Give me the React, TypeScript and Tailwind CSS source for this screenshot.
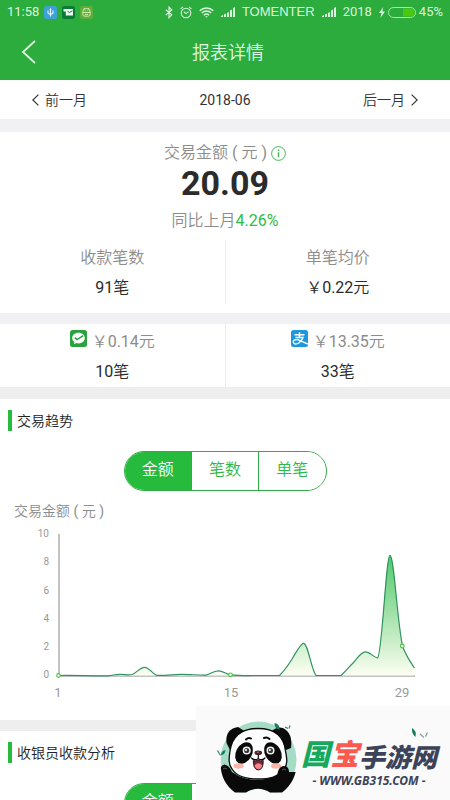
import type { ReactNode } from "react";

const tabs = ["金额", "笔数", "单笔"];

const linePath =
  "M58.5 155.5C75 155.2 92 156 108 155.8C113 155.5 115 154.3 120 154.3C125 154.3 128 155.4 132 154.5C136 153.5 140 147.3 144.5 147.3C149 147.3 153 154 156.5 155.3C164 156 174 154.3 181 154.3C190 154.3 198 155.3 206 155.2C210 154.5 213 150.8 218.5 150.8C223 150.8 226 154.3 230.5 154.8C240 155.8 250 155.5 255 155.5L279.5 155.5C284 151 288 145.5 291.8 139.5C296 132 301 123.3 303.5 123.3C308 123.3 311 149 316 155.5L341 155.5C345 152 349 147 353.5 142.5C357 138.5 361 131.8 365.5 131.8C370 131.8 373 137 377.5 138C382 136 386 35.3 390 35.3C394 35.3 397 100 402.5 126C406 136 411 143 414.5 148";

function SignalBars() {
  return (
    <svg width="14" height="10" viewBox="0 0 14 10" fill="#d9f6dd">
      <path d="M0 10V9L2 8v2zM3 10V7.6L5 6.6V10zM6 10V6l2-1v5zM9 10V3.5l2-1V10zM12 10V1l2-1v10z" />
    </svg>
  );
}

function StatusBar() {
  return (
    <div className="flex h-6 items-center justify-between px-[7px] text-[13px] leading-6 text-[#d9f6dd]">
      <div className="flex items-center gap-[5px]">
        <span>11:58</span>
        <svg width="13" height="13" viewBox="0 0 13 13">
          <rect width="13" height="13" rx="2.5" fill="#3ea2d8" />
          <path d="M6.5 10.5V3M4 4.5v2q0 1.5 2.5 1.7M9 4.5v2q0 1.5-2.5 1.7" fill="none" stroke="#e8f8ff" strokeWidth="1.1" />
          <path d="M5.3 3.8L6.5 2l1.2 1.8z" fill="#e8f8ff" />
        </svg>
        <svg width="13" height="13" viewBox="0 0 13 13">
          <rect width="13" height="13" rx="2.5" fill="#0b7a34" />
          <path d="M1.5 3H11v6.5H3.8V5.6H1.5z" fill="#f0fff3" />
          <path d="M5.5 5.2l2 1.4 3-1.8" fill="none" stroke="#0b7a34" strokeWidth="1" />
        </svg>
        <svg width="13" height="13" viewBox="0 0 13 13">
          <rect width="13" height="13" rx="2.5" fill="#5fae3c" />
          <path d="M2.8 5.8a3.7 3.3 0 0 1 7.4 0v2.4a2 2 0 0 1-2 2H4.8a2 2 0 0 1-2-2zM2.8 6.5h7.4M4 2l.9 1.2M9 2l-.9 1.2M5 8.5h3M5 4.8h.6M7.6 4.8h.6" fill="none" stroke="#d6efb8" strokeWidth=".9" />
        </svg>
      </div>
      <div className="flex items-center gap-[7px]">
        <svg width="8" height="13" viewBox="0 0 8 13" fill="none" stroke="#d9f6dd" strokeWidth="1.2">
          <path d="M.8 3.8l6 5L4 11.6V1.2L6.8 4l-6 5" />
        </svg>
        <svg width="12" height="13" viewBox="0 0 12 13" fill="none" stroke="#d9f6dd" strokeWidth="1.1">
          <circle cx="6" cy="7" r="4.8" />
          <path d="M3.8 5.8L6 7.6l2.4-1.8M.6 2.8L3 .8M11.4 2.8L9 .8" />
        </svg>
        <svg width="15" height="11" viewBox="0 0 15 11" fill="none" stroke="#d9f6dd" strokeWidth="1.5">
          <path d="M.7 3.8a9.8 9.8 0 0 1 13.6 0M2.8 6a6.8 6.8 0 0 1 9.4 0M4.9 8.2a3.8 3.8 0 0 1 5.2 0" />
          <path d="M6.1 9.2h2.8L7.5 10.8z" fill="#d9f6dd" stroke="none" />
        </svg>
        <SignalBars />
        <span className="font-['Liberation_Sans',sans-serif]">TOMENTER</span>
        <SignalBars />
        <span>2018</span>
        <div className="flex items-center gap-[3px]">
          <svg width="6" height="11" viewBox="0 0 6 11" fill="#d9f6dd">
            <path d="M4.3 0L0 6h2.6L1.4 11 6 4.6H3.3z" />
          </svg>
          <svg width="28" height="11" viewBox="0 0 28 11">
            <rect x=".5" y=".5" width="27" height="10" rx="5" fill="none" stroke="#a9e6ac" />
            <path d="M15 1.5h7.5a4 4 0 0 1 0 8H15z" fill="#4cc70f" />
          </svg>
          <span>45%</span>
        </div>
      </div>
    </div>
  );
}

function Chevron({ flip }: { flip?: boolean }) {
  return (
    <svg width="7" height="12" viewBox="0 0 7 12" fill="none" stroke="#333" strokeWidth="1.2">
      <path d={flip ? "M.6.6L6.2 6 .6 11.4" : "M6.4.6L.8 6l5.6 5.4"} />
    </svg>
  );
}

function Stat({ label, value }: { label: string; value: string }) {
  return (
    <div className="flex flex-1 flex-col items-center gap-1.5 pt-1.5 pb-1 leading-6">
      <span className="text-[#8c8c8c]">{label}</span>
      <span className="text-[#2b2b2b]">{value}</span>
    </div>
  );
}

function Channel({ icon, amount, count }: { icon: ReactNode; amount: string; count: string }) {
  return (
    <div className="flex flex-1 flex-col items-center gap-1.5 pt-1.5 pb-[3px] leading-6">
      <div className="flex items-start gap-[5px] text-[#8c8c8c]">
        {icon}
        <span>{amount}</span>
      </div>
      <span className="text-[#2b2b2b]">{count}</span>
    </div>
  );
}

function WechatIcon() {
  return (
    <svg width="17" height="17" viewBox="0 0 17 17">
      <rect width="17" height="17" rx="2.5" fill="#2aa33f" />
      <path d="M8.5 2.8c-3.6 0-6.3 2.3-6.3 5.3 0 1.7.9 3.1 2.2 4l-.4 2.2 2.3-1.2c.7.2 1.4.3 2.2.3 3.6 0 6.3-2.3 6.3-5.3S12.1 2.8 8.5 2.8z" fill="#fff" />
      <path d="M4.8 7.6l2.3 2 6.2-4" fill="none" stroke="#2aa33f" strokeWidth="1.5" />
    </svg>
  );
}

function AlipayIcon() {
  return (
    <svg width="17" height="17" viewBox="0 0 17 17">
      <rect width="17" height="17" rx="2.5" fill="#1c97dc" />
      <g fill="none" stroke="#fff">
        <path d="M3.5 4.8h10M8.5 2.3v5" strokeWidth="1.5" />
        <path d="M4.5 7.5h7.5Q10.8 11 7.8 13Q4.5 14.8 2.8 13.2Q1.5 11.2 3.5 10Q6 9 9.5 10.8L17 14" strokeWidth="1.4" />
      </g>
    </svg>
  );
}

function SectionTitle({ children }: { children: ReactNode }) {
  return (
    <h2 className="flex h-[21px] items-center gap-[5px] pl-2 text-sm leading-[21px] text-[#222]">
      <span className="h-[21px] w-1 bg-[#26bb3d]" />
      <span className="pt-0.5">{children}</span>
    </h2>
  );
}

function Tabs() {
  return (
    <div className="mx-auto flex h-10 w-[203px] overflow-hidden rounded-full border border-[#2fae45]">
      {tabs.map((tab, i) => (
        <button
          key={tab}
          type="button"
          className={
            i === 0
              ? "flex-1 bg-[#26bb3d] pb-0.5 text-white"
              : "flex-1 border-l border-[#2fae45] bg-white pb-0.5 text-[#2fb848]"
          }
        >
          {tab}
        </button>
      ))}
    </div>
  );
}

function TrendChart() {
  return (
    <svg className="block w-full" viewBox="0 0 450 200" fontFamily="Roboto, sans-serif">
      <defs>
        <linearGradient id="area" gradientUnits="userSpaceOnUse" x1="0" y1="35" x2="0" y2="156">
          <stop offset="0" stopColor="#4fca6c" />
          <stop offset=".5" stopColor="#a5e2ab" />
          <stop offset="1" stopColor="#fdfff3" />
        </linearGradient>
      </defs>
      <g fontSize="10" fill="#999" textAnchor="end">
        <text x="49" y="17">10</text>
        <text x="49" y="45">8</text>
        <text x="49" y="74">6</text>
        <text x="49" y="102">4</text>
        <text x="49" y="130">2</text>
        <text x="49" y="158">0</text>
      </g>
      <g fontSize="13" fill="#999" textAnchor="middle">
        <text x="58" y="177">1</text>
        <text x="231" y="177">15</text>
        <text x="402" y="177">29</text>
      </g>
      <path d="M59 14V156H415" fill="none" stroke="#b0b0b0" strokeWidth="1.5" />
      <path d={linePath + "V155.5H58.5Z"} fill="url(#area)" />
      <path d={linePath} fill="none" stroke="#2f9260" strokeWidth="1.2" strokeLinejoin="round" />
      <g fill="#fff" stroke="#4cc644" strokeWidth="1.2">
        <circle cx="58.5" cy="155.5" r="1.8" />
        <circle cx="230.5" cy="154.8" r="1.8" />
        <circle cx="402.3" cy="126" r="1.8" />
      </g>
    </svg>
  );
}

function Panda() {
  return (
    <svg className="shrink-0" width="96" height="85" viewBox="0 0 96 85">
      <defs>
        <clipPath id="badge">
          <path d="M15.5 0H92V48Q91 67 77 77.5H65Q53 70 41 77.5H30Q15.5 67 15.5 48z" />
        </clipPath>
      </defs>
      <circle cx="53.5" cy="44.5" r="38" fill="#a4dcc6" clipPath="url(#badge)" />
      <g clipPath="url(#badge)">
        <path d="M15 57Q15 50 19.5 49.5Q24 50 27 57Q38 65 53 65Q66 64 73 57Q76 50 80 51Q84 52 84 57L92 57V85H15z" fill="#0a0a0a" />
      </g>
      <path d="M21.5 28Q20 14 33 12L41 17L25 35z" fill="#0a0a0a" />
      <path d="M67 16Q72 11 78 13Q88 18 86 33L81 35z" fill="#0a0a0a" />
      <path d="M53 13.5C70 13.5 79 22 80.5 36C82 44 83 49 79 54C73 62 65 64 53 64C41 64 32 62 27 54C23 49 24 43 25 36C27 22 36 13.5 53 13.5z" fill="#fff" stroke="#0a0a0a" strokeWidth="1.3" />
      <ellipse cx="39" cy="38" rx="8" ry="11.5" transform="rotate(28 39 38)" fill="#0a0a0a" />
      <ellipse cx="68" cy="38" rx="8" ry="11.5" transform="rotate(-28 68 38)" fill="#0a0a0a" />
      <g fill="#3a3a3a" stroke="#eee" strokeWidth="1.5">
        <circle cx="41.7" cy="35.5" r="3.3" />
        <circle cx="65.5" cy="35.5" r="3.3" />
      </g>
      <circle cx="41" cy="35" r="1.1" fill="#fff" />
      <circle cx="64.8" cy="35" r="1.1" fill="#fff" />
      <path d="M41 24.5Q43.5 22 46 23.5M59 23Q62 21.5 64.5 24" fill="none" stroke="#0a0a0a" strokeWidth="2" strokeLinecap="round" />
      <ellipse cx="53.3" cy="37.7" rx="3.8" ry="2.3" fill="#4a262b" />
      <path d="M52 37.2h2" stroke="#c98a90" strokeWidth=".9" />
      <path d="M53.3 40v3.5M46.5 43Q49 46 53.3 43.7Q57.5 46 60 43" fill="none" stroke="#0a0a0a" strokeWidth="1.2" strokeLinecap="round" />
      <path d="M48.3 45.5Q51 46.3 53.3 45Q55.5 46.3 58.3 45.5Q58.5 54.5 53.3 55Q48 54.5 48.3 45.5z" fill="#7d2630" stroke="#0a0a0a" strokeWidth=".8" />
      <path d="M49.5 50.5Q53.3 46 57.2 50.5Q56 54.3 53.3 54.3Q51 54.3 49.5 50.5z" fill="#f4848a" />
      <ellipse cx="33.5" cy="51" rx="5.3" ry="2.8" fill="#fbb4a8" />
      <ellipse cx="71" cy="51" rx="5.3" ry="2.8" fill="#fbb4a8" />
      <path d="M72 65Q72 51 79 51Q84 52 84 61z" fill="#0a0a0a" />
      <path d="M18 54q2-2 4 0M77 55q2-2 4 0" fill="none" stroke="#777" strokeWidth=".7" />
      <path d="M69.5 8Q75 9 74.5 15Q69 13 69.5 8zM20.5 35Q16 36 16 40Q20 40 20.5 35z" fill="#197b5e" />
      <path d="M80 12l3 1.5M85 10.5l-1 3M12.5 35.5l3 5" stroke="#247c65" strokeWidth="1.1" />
    </svg>
  );
}

function SiteBadge() {
  return (
    <aside className="fixed right-0 bottom-0 flex h-[94px] w-[254px] bg-[#fafafa] pt-[9px] pl-[9px]">
      <Panda />
      <div className="relative flex flex-col items-center pt-5 text-[#3c4257]">
        <div className="flex h-9 items-center font-['Noto_Sans_CJK_SC',sans-serif] font-black whitespace-nowrap italic">
          <span className="text-[29px] text-[#16a85c]">国</span>
          <span className="text-[29px] text-[#fb5a50]">宝</span>
          <span className="pt-1 text-[26px]">手游网</span>
        </div>
        <div className="mt-0.5 font-['Noto_Sans',sans-serif] text-xs leading-4 font-bold whitespace-nowrap italic">
          - WWW.GB315.COM -
        </div>
        <svg className="absolute top-3 right-2" width="18" height="12" viewBox="0 0 18 12">
          <path d="M1 1Q6 4 4.5 10Q.5 7 1 1z" fill="#197b5e" />
          <path d="M9 7l4 3.5M16.5 5.5l-2 4" stroke="#8a9a98" strokeWidth="1.2" />
        </svg>
      </div>
    </aside>
  );
}

export default function App() {
  return (
    <div className="h-screen overflow-hidden bg-white font-[Roboto,'Noto_Sans_CJK_SC_DemiLight','Noto_Sans_CJK_SC_Light','Noto_Sans_CJK_SC',sans-serif] text-base">
      <header className="bg-[#2bac3d]">
        <StatusBar />
        <div className="flex h-14 items-center">
          <button type="button" aria-label="返回" className="w-14 pl-[21px]">
            <svg width="15" height="24" viewBox="0 0 15 24" fill="none" stroke="#e4f8e6" strokeWidth="1.7">
              <path d="M14 1L2 12l12 11" />
            </svg>
          </button>
          <h1 className="flex-1 pt-0.5 text-center text-lg text-[#e4f8e6]">报表详情</h1>
          <span className="w-[50px]" />
        </div>
      </header>

      <nav className="flex h-[39px] items-center justify-between px-8 text-sm text-[#333]">
        <button type="button" className="flex items-center gap-1.5">
          <Chevron />
          前一月
        </button>
        <span>2018-06</span>
        <button type="button" className="flex items-center gap-1.5">
          后一月
          <Chevron flip />
        </button>
      </nav>

      {/* Monthly summary */}
      <section className="border-t-[13px] border-[#f1f1f4] pt-[9px] pb-[9px]">
        <div className="flex items-center justify-center gap-1 leading-6 text-[#8c8c8c]">
          交易金额 ( 元 )
          <svg width="15" height="15" viewBox="0 0 15 15" fill="none" stroke="#4ab75a">
            <circle cx="7.5" cy="7.5" r="6.9" />
            <path d="M7.5 3.6v1.5M7.5 6.3v5" strokeWidth="1.4" />
          </svg>
        </div>
        <div className="text-center text-[34px] leading-9 font-bold text-[#2b2b2b]">20.09</div>
        <div className="mt-2 text-center leading-6 text-[#8c8c8c]">
          同比上月<span className="text-[#2fbd48]">4.26%</span>
        </div>
        <div className="mt-[7px] flex divide-x divide-[#ececec]">
          <Stat label="收款笔数" value="91笔" />
          <Stat label="单笔均价" value="￥0.22元" />
        </div>
      </section>

      {/* Payment channels */}
      <section className="border-t-[11px] border-[#f1f1f4]">
        <div className="flex divide-x divide-[#ececec]">
          <Channel icon={<WechatIcon />} amount="￥0.14元" count="10笔" />
          <Channel icon={<AlipayIcon />} amount="￥13.35元" count="33笔" />
        </div>
      </section>

      <section className="border-t-[12px] border-[#eee] pt-[11px]">
        <SectionTitle>交易趋势</SectionTitle>
        <div className="mt-5">
          <Tabs />
        </div>
        <div className="mt-2.5 -mb-px pl-3.5 text-sm leading-5 text-[#8c8c8c]">交易金额 ( 元 )</div>
        <TrendChart />
      </section>

      <section className="border-t-[11px] border-[#eee] pt-[11px]">
        <SectionTitle>收银员收款分析</SectionTitle>
        <div className="mt-5">
          <Tabs />
        </div>
      </section>

      <SiteBadge />
    </div>
  );
}
